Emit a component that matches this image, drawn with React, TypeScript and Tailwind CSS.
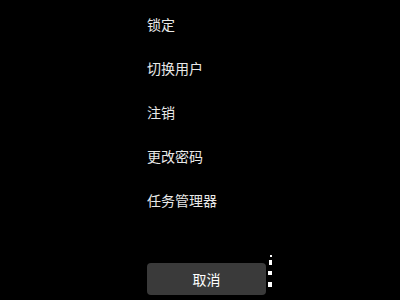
import React from "react";

const items = ["锁定", "切换用户", "注销", "更改密码", "任务管理器"];

export default function App() {
  return (
    <div
      className="w-[400px] h-[300px] bg-black overflow-hidden text-[#e8e8e8]"
      style={{ fontFamily: '"Noto Sans CJK SC", "Noto Sans", sans-serif' }}
    >
      <div className="flex flex-col gap-[24px] pl-[147px] pt-[14px]">
        {items.map((t) => (
          <div key={t} className="h-[20px] text-[14px] leading-[20px]">
            {t}
          </div>
        ))}
      </div>

      <div className="flex items-start pl-[147px] mt-[53px]">
        <button
          type="button"
          className="w-[119px] h-[32px] rounded-[4px] bg-[#3a3a3a] text-[14px] text-white"
        >
          取消
        </button>
        {/* leftover pixels at right edge of button */}
        <div className="flex flex-col items-end w-[5px] ml-[1px] -mt-[8px]">
          <div className="w-[2px] h-[2px] bg-white" />
          <div className="w-[3px] h-[5px] bg-white mt-[3px]" />
          <div className="w-[4px] h-[4px] bg-white mt-[6px]" />
          <div className="w-[4px] h-[5px] bg-white mt-[7px]" />
        </div>
      </div>
    </div>
  );
}
